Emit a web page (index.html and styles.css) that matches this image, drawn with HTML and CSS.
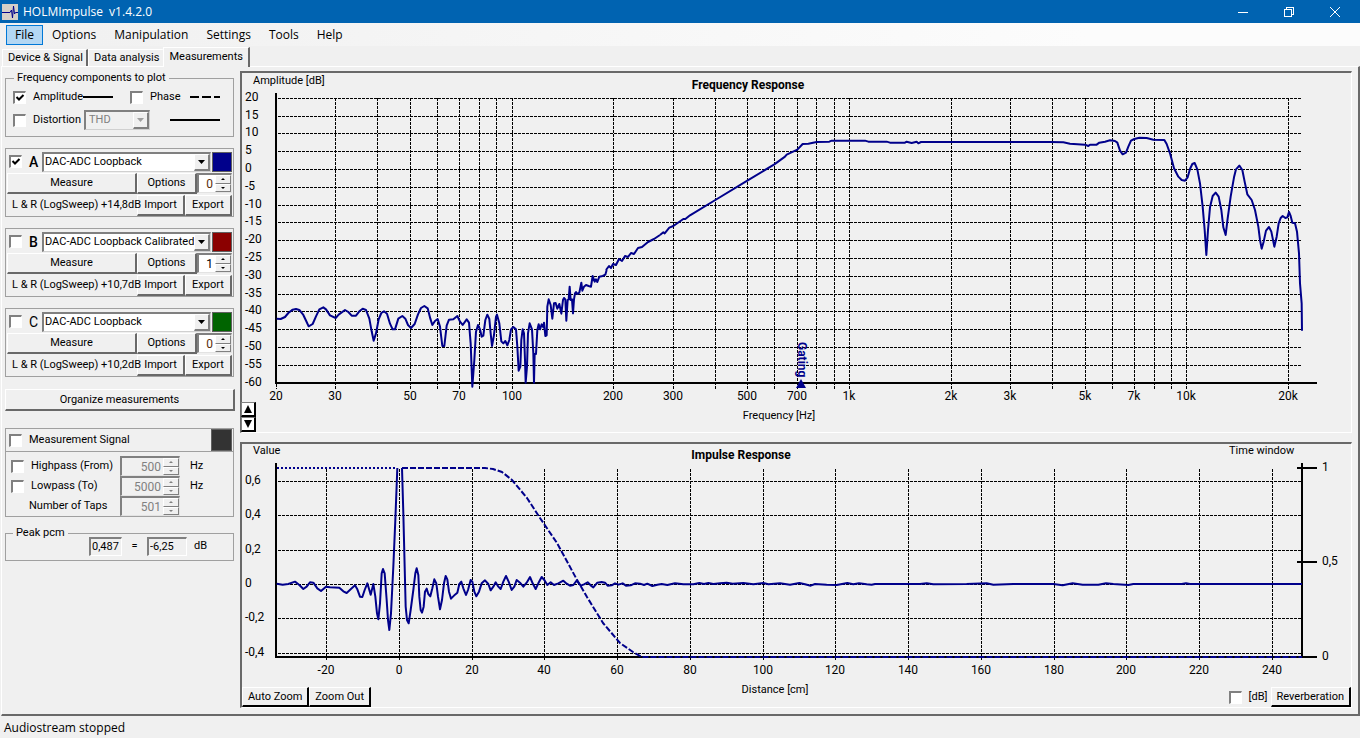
FILE: index.html
```html
<!DOCTYPE html>
<html lang="en">
<head>
<meta charset="utf-8">
<title>HOLMImpulse v1.4.2.0</title>
<link rel="stylesheet" href="styles.css">
</head>
<body>
<div class="app">
  <header class="titlebar">
    <svg class="app-icon" viewBox="0 0 16 16" width="16" height="16" aria-hidden="true">
      <rect width="16" height="16" fill="#d4d0c8"/>
      <path d="M0 8.5H8L9.5 6L10.5 14L11.5 2L12.5 10L13.5 8.5H16" fill="none" stroke="#00008b" stroke-width="1"/>
    </svg>
    <h1 class="app-title">HOLMImpulse&nbsp; v1.4.2.0</h1>
    <div class="window-buttons">
      <button class="window-button" aria-label="Minimize"><svg width="10" height="10" viewBox="0 0 10 10"><path d="M0 5.5H10"/></svg></button>
      <button class="window-button" aria-label="Restore"><svg width="10" height="10" viewBox="0 0 10 10"><path d="M.5 2.5H7.5V9.5H.5ZM2.5 2.5V.5H9.5V7.5H7.5"/></svg></button>
      <button class="window-button" aria-label="Close"><svg class="smooth" width="10" height="10" viewBox="0 0 10 10"><path d="M0 0L10 10M10 0L0 10"/></svg></button>
    </div>
  </header>

  <nav class="menubar">
    <button class="menu-item active">File</button>
    <button class="menu-item">Options</button>
    <button class="menu-item">Manipulation</button>
    <button class="menu-item">Settings</button>
    <button class="menu-item">Tools</button>
    <button class="menu-item">Help</button>
  </nav>

  <div class="tabs" role="tablist">
    <button class="tab" role="tab">Device &amp; Signal</button>
    <button class="tab" role="tab">Data analysis</button>
    <button class="tab selected" role="tab" aria-selected="true">Measurements</button>
  </div>

  <main class="page">
    <aside class="sidebar">
      <fieldset class="group components">
        <legend>Frequency components to plot</legend>
        <div class="component-row">
          <label class="check-label component-name"><input type="checkbox" class="check" checked>Amplitude</label>
          <svg class="line-sample" width="30" height="2"><path d="M0 1H30"/></svg>
          <label class="check-label phase"><input type="checkbox" class="check">Phase</label>
          <svg class="line-sample" width="30" height="2"><path d="M0 1H30" stroke-dasharray="9 3"/></svg>
        </div>
        <div class="component-row">
          <label class="check-label component-name"><input type="checkbox" class="check">Distortion</label>
          <span class="combo thd"><select disabled aria-label="Distortion type"><option>THD</option></select><span class="combo-arrow"></span></span>
          <svg class="line-sample distortion-line" width="50" height="2"><path d="M0 1H50"/></svg>
        </div>
      </fieldset>

      <section class="slot">
        <div class="slot-top">
          <input type="checkbox" class="check" id="slot-a" checked>
          <label class="slot-name strong" for="slot-a">A</label>
          <span class="combo"><select aria-label="Measurement A"><option>DAC-ADC Loopback</option></select><span class="combo-arrow"></span></span>
          <button class="swatch blue" aria-label="Colour A"></button>
        </div>
        <div class="slot-middle">
          <button class="button">Measure</button>
          <button class="button">Options</button>
          <span class="spin hot"><input type="number" value="0" aria-label="Offset A"><button class="up" aria-label="Up"></button><button class="down" aria-label="Down"></button></span>
        </div>
        <div class="slot-bottom">
          <span class="slot-info">L &amp; R (LogSweep) +14,8dB</span>
          <button class="button">Import</button>
          <button class="button">Export</button>
        </div>
      </section>

      <section class="slot">
        <div class="slot-top">
          <input type="checkbox" class="check" id="slot-b">
          <label class="slot-name strong" for="slot-b">B</label>
          <span class="combo"><select aria-label="Measurement B"><option>DAC-ADC Loopback Calibrated</option></select><span class="combo-arrow"></span></span>
          <button class="swatch red" aria-label="Colour B"></button>
        </div>
        <div class="slot-middle">
          <button class="button">Measure</button>
          <button class="button">Options</button>
          <span class="spin"><input type="number" value="1" aria-label="Offset B"><button class="up" aria-label="Up"></button><button class="down" aria-label="Down"></button></span>
        </div>
        <div class="slot-bottom">
          <span class="slot-info">L &amp; R (LogSweep) +10,7dB</span>
          <button class="button">Import</button>
          <button class="button">Export</button>
        </div>
      </section>

      <section class="slot">
        <div class="slot-top">
          <input type="checkbox" class="check" id="slot-c">
          <label class="slot-name" for="slot-c">C</label>
          <span class="combo"><select aria-label="Measurement C"><option>DAC-ADC Loopback</option></select><span class="combo-arrow"></span></span>
          <button class="swatch green" aria-label="Colour C"></button>
        </div>
        <div class="slot-middle">
          <button class="button">Measure</button>
          <button class="button">Options</button>
          <span class="spin hot"><input type="number" value="0" aria-label="Offset C"><button class="up" aria-label="Up"></button><button class="down" aria-label="Down"></button></span>
        </div>
        <div class="slot-bottom">
          <span class="slot-info">L &amp; R (LogSweep) +10,2dB</span>
          <button class="button">Import</button>
          <button class="button">Export</button>
        </div>
      </section>

      <button class="button organize">Organize measurements</button>

      <section class="signal">
        <div class="signal-head">
          <label class="check-label"><input type="checkbox" class="check">Measurement Signal</label>
          <button class="swatch dark" aria-label="Signal colour"></button>
        </div>
        <div class="signal-body">
          <label class="check-label"><input type="checkbox" class="check">Highpass (From)</label>
          <span class="spin off"><input type="number" value="500" disabled aria-label="Highpass frequency"><button class="up" disabled aria-label="Up"></button><button class="down" disabled aria-label="Down"></button></span>
          <span>Hz</span>
          <label class="check-label"><input type="checkbox" class="check">Lowpass (To)</label>
          <span class="spin off"><input type="number" value="5000" disabled aria-label="Lowpass frequency"><button class="up" disabled aria-label="Up"></button><button class="down" disabled aria-label="Down"></button></span>
          <span>Hz</span>
          <label class="taps" for="taps">Number of Taps</label>
          <span class="spin off"><input type="number" id="taps" value="501" disabled><button class="up" disabled aria-label="Up"></button><button class="down" disabled aria-label="Down"></button></span>
        </div>
      </section>

      <fieldset class="group peak">
        <legend>Peak pcm</legend>
        <div class="peak-row">
          <input class="readout narrow" value="0,487" readonly aria-label="Peak value">
          <span class="equals">=</span>
          <input class="readout" value="-6,25" readonly aria-label="Peak in dB">
          <span class="unit">dB</span>
        </div>
      </fieldset>
    </aside>

    <div class="charts">
      <section class="chart">
        <svg class="plot" viewBox="242 73 1109 359" role="img" aria-label="Frequency Response">
          <path class="grid" d="M278 98.5H1302M278 116.5H1302M278 133.5H1302M278 151.5H1302M278 169.5H1302M278 187.5H1302M278 205.5H1302M278 222.5H1302M278 240.5H1302M278 258.5H1302M278 276.5H1302M278 294.5H1302M278 311.5H1302M278 329.5H1302M278 347.5H1302M278 365.5H1302"/>
          <path class="grid" d="M276.5 384V389M335.5 98V389M377.5 98V389M410.5 98V389M437.5 98V389M459.5 98V389M479.5 98V389M496.5 98V389M512.5 98V389M613.5 98V389M673.5 98V389M715.5 98V389M747.5 98V389M774.5 98V389M797.5 98V389M816.5 98V389M834.5 98V389M849.5 98V389M951.5 98V389M1010.5 98V389M1052.5 98V389M1085.5 98V389M1112.5 98V389M1134.5 98V389M1154.5 98V389M1171.5 98V389M1186.5 98V389M1288.5 98V389"/>
          <path class="axis" d="M276 93V384M275 383H1317"/>
          <g class="curve">
            <path transform="translate(240 270) scale(.33333)" d="M110 146L122 147L135 141L145 129L158 119L168 117L178 120L190 135L200 156L206 169L218 162L228 139L238 118L250 112L258 118L270 136L287 144L296 134L315 120L325 126L335 137L348 137L358 124L368 116L378 120L388 146L395 184L401 212L408 190L416 148L424 129L432 124L441 131L450 161L458 178L465 178L475 146L487 138L496 146L504 165L513 174L524 162L534 133L543 114L553 108L563 115L571 146L577 165L585 153L593 147L600 170L607 228L613 228L620 167L627 149L640 148L652 138L660 155L668 165L680 148L687 158L692 220L697 350L703 270L708 185L714 165L720 178L725 200L730 197L736 150L742 134L748 147L752 190L756 228L762 195L768 140L771 134L778 160L784 214L790 220L796 213L802 226L808 210L813 178L820 171L828 178L832 230L836 302L841 290L844 210L848 178L852 190L855 270L857 338L861 290L864 190L869 160L876 178L880 250L882 338L884 252L888 252L892 180L896 163L900 178L905 163L910 172L912 158L916 198L920 196L922 110L926 88L932 105L937 146L942 100L947 99L952 116L958 102L964 131L969 90L972 84L976 88L979 152L983 90L986 88L989 50L992 90L996 88L999 130L1002 88L1005 70L1008 66L1012 72L1018 68L1024 38L1027 62L1032 50L1038 45L1046 48L1053 50L1058 18L1064 35L1068 28L1072 36L1078 20L1088 18L1096 14L1100 0"/>
            <path d="M606 270L609 266L611 268L613 264L616 265L619 259L622 261L625 256L628 257L631 253L634 254L638 248L642 247L648 242L654 239L660 235"/>
            <path transform="translate(660 70) scale(.33333)" d="M0 495L10 487L14 490L28 473L40 468L70 447L76 447L90 436L166 390L262 332L343 283L375 260L380 254L412 239L428 222L445 221L470 216L508 215L515 212L615 212L625 215L680 215L690 218L735 218L740 215L755 219L770 215L775 220L783 216L1170 216"/>
            <path transform="translate(1050 90) scale(.33333)" d="M0 156L40 157L60 161L105 164L115 168L120 164L140 164L148 158L165 155L180 151L195 153L202 158L210 182L218 193L228 188L235 170L243 152L253 147L268 143L290 144L310 149L343 150L350 162L360 190L372 235L385 260L395 270L405 272L413 262L420 237L427 222L434 219L442 238L450 280L458 350L464 420L469 495L474 420L480 352L488 318L497 308L506 320L514 360L520 412L527 435L533 385L542 320L552 262L558 238L568 227L577 240L585 280L592 313L605 330L615 360L625 410L630 450L635 476L641 455L648 422L657 411L664 425L673 470L680 440L686 400L692 384L698 378L706 384L712 382L717 366L722 378L727 398L735 400L741 425L747 490L750 580L755 640L756 722"/>
          </g>
          <path class="marker" d="M796 388L801 379L806 388Z"/>
          <text class="gating" transform="translate(798 342) rotate(90)">Gating</text>
          <text x="253" y="84">Amplitude [dB]</text>
          <text class="heading mid" x="748" y="89">Frequency Response</text>
          <g class="ticks">
            <text x="245" y="101">20</text><text x="245" y="119">15</text><text x="245" y="136">10</text><text x="245" y="154">5</text><text x="245" y="172">0</text><text x="245" y="190">-5</text><text x="245" y="208">-10</text><text x="245" y="225">-15</text><text x="245" y="243">-20</text><text x="245" y="261">-25</text><text x="245" y="279">-30</text><text x="245" y="297">-35</text><text x="245" y="314">-40</text><text x="245" y="332">-45</text><text x="245" y="350">-50</text><text x="245" y="368">-55</text><text x="245" y="386">-60</text>
          </g>
          <g class="ticks mid">
            <text x="276" y="400">20</text><text x="335" y="400">30</text><text x="410" y="400">50</text><text x="459" y="400">70</text><text x="512" y="400">100</text><text x="613" y="400">200</text><text x="673" y="400">300</text><text x="747" y="400">500</text><text x="797" y="400">700</text><text x="849" y="400">1k</text><text x="951" y="400">2k</text><text x="1010" y="400">3k</text><text x="1085" y="400">5k</text><text x="1134" y="400">7k</text><text x="1186" y="400">10k</text><text x="1288" y="400">20k</text>
          </g>
          <text class="mid" x="779" y="419">Frequency [Hz]</text>
        </svg>
        <div class="scale-buttons">
          <button class="scale-button" aria-label="Scale up"><svg width="8" height="8"><path d="M4 0L8 8H0Z"/></svg></button>
          <button class="scale-button" aria-label="Scale down"><svg width="8" height="8"><path d="M0 0H8L4 8Z"/></svg></button>
        </div>
      </section>

      <section class="chart">
        <svg class="plot" viewBox="242 444 1109 263" role="img" aria-label="Impulse Response">
          <path class="grid" d="M278 481.5H1302M278 515.5H1302M278 550.5H1302M278 584.5H1302M278 618.5H1302M278 653.5H1302"/>
          <path class="grid" d="M326.5 469V661M399.5 469V661M472.5 469V661M544.5 469V661M617.5 469V661M690.5 469V661M763.5 469V661M835.5 469V661M908.5 469V661M981.5 469V661M1054.5 469V661M1126.5 469V661M1199.5 469V661M1272.5 469V661"/>
          <path class="axis" d="M276 463V658M275 657H1302M1302 463V658M1297 468H1317M1297 562H1317M1302 657H1317"/>
          <g class="curve">
            <path d="M277 468H397" stroke-dasharray="2 2"/>
            <path stroke-dasharray="6 2" d="M402 468H485L493 469L502 472L512 480L527 498L540 518L557 543L576 578L587 597L603 623L620 643L633 652L642 657H1302"/>
            <path transform="translate(240 440) scale(.33333)" d="M110 431L128 434L145 432L165 425L178 435L190 447L200 440L210 427L220 428L232 445L243 453L258 440L270 442L298 443L310 454L320 459L332 448L345 436L352 448L360 470L367 471L374 450L382 430L388 450L392 464L400 432L406 470L411 520L415 538L420 490L425 400L429 387L434 400L440 480L444 540L448 570L453 520L460 380L466 240L472 84M486 84L490 220L494 380L497 500L501 540L506 550L512 510L520 450L526 400L530 385L535 405L538 470L542 510L546 518L551 500L555 455L560 446L565 462L571 469L577 445L583 418L589 430L594 470L600 508L606 480L612 430L617 408L622 418L627 455L633 476L645 464L652 458L658 432L664 425L670 445L678 465L684 450L692 420L697 425L703 455L709 469L717 455L725 430L735 421L745 432L752 451L760 440L767 427L775 440L782 447L790 425L798 408L806 425L815 450L823 440L830 420L840 428L850 440L860 428L870 411L878 430L887 447L895 430L905 411L913 420L922 435L932 427L942 435L955 430L970 422L980 431L990 437L1000 435L1010 422L1022 437L1032 433L1043 427L1052 436L1060 442L1072 428L1085 426L1095 428L1103 437L1115 436L1125 430L1135 434L1148 430L1158 437L1172 436L1185 430L1200 431L1212 435L1222 431L1237 438L1252 434L1265 432L1282 435L1305 430L1330 433L1360 433L1378 429L1392 432L1405 429L1420 432L1440 430L1460 428L1478 431L1510 429L1540 433L1570 429L1585 433L1620 430L1650 434L1678 429L1695 433L1712 437L1725 432L1760 434L1790 435L1822 429L1840 433L1857 430L1880 433L1895 434L1905 432L2040 432L2060 430L2080 433L2180 432L2240 430L2260 434L2320 432L2400 432L2440 432L2468 436L2498 430L2528 434L2575 434L2598 430L2620 432L2665 435L2680 432L2825 432L2838 430L2850 432L3186 432"/>
          </g>
          <text x="253" y="454">Value</text>
          <text x="1229" y="454">Time window</text>
          <text class="heading mid" x="741" y="459">Impulse Response</text>
          <g class="ticks">
            <text x="245" y="484">0,6</text><text x="245" y="518">0,4</text><text x="245" y="553">0,2</text><text x="245" y="587">0</text><text x="245" y="621">-0,2</text><text x="245" y="656">-0,4</text>
            <text x="1322" y="471">1</text><text x="1322" y="565">0,5</text><text x="1322" y="660">0</text>
          </g>
          <g class="ticks mid">
            <text x="326" y="674">-20</text><text x="399" y="674">0</text><text x="472" y="674">20</text><text x="544" y="674">40</text><text x="617" y="674">60</text><text x="690" y="674">80</text><text x="763" y="674">100</text><text x="835" y="674">120</text><text x="908" y="674">140</text><text x="981" y="674">160</text><text x="1054" y="674">180</text><text x="1126" y="674">200</text><text x="1199" y="674">220</text><text x="1272" y="674">240</text>
          </g>
          <text class="mid" x="775" y="693">Distance [cm]</text>
        </svg>
        <div class="chart-tools">
          <button class="button bold-edge">Auto Zoom</button>
          <button class="button bold-edge">Zoom Out</button>
          <label class="check-label db"><input type="checkbox" class="check">[dB]</label>
          <button class="button bold-edge">Reverberation</button>
        </div>
      </section>
    </div>
  </main>

  <footer class="statusbar">Audiostream stopped</footer>
</div>
</body>
</html>
```

FILE: styles.css
```css
* { box-sizing: border-box; }

body {
  margin: 0;
  background: #f0f0f0;
  color: #000;
  font: 11px/14px Roboto, "Liberation Sans", sans-serif;
}

button, input, select {
  margin: 0;
  padding: 0;
  border: 0;
  border-radius: 0;
  background: none;
  color: inherit;
  font: inherit;
}

.app { display: flex; flex-direction: column; min-height: 100vh; }

/* Title bar */
.titlebar {
  display: flex;
  align-items: center;
  gap: 5px;
  height: 23px;
  padding: 0 2px;
  background: #0063b1;
  color: #fff;
}
.app-title { flex: 1; margin: 0; font: 12px/16px "Open Sans", "Noto Sans", sans-serif; }
.window-buttons { display: flex; }
.window-button { display: grid; place-items: center; width: 46px; height: 22px; }
.window-button svg { fill: none; stroke: #fff; shape-rendering: crispEdges; }
.window-button .smooth { shape-rendering: auto; }

/* Menu */
.menubar {
  display: flex;
  align-items: center;
  height: 23px;
  padding: 0 6px;
  background: linear-gradient(90deg, #f0f0f0, #fcfcfc 80%);
}
.menu-item {
  height: 20px;
  padding: 0 8px;
  border: 1px solid transparent;
  font: 12px/16px "Open Sans", "Noto Sans", sans-serif;
}
.menu-item.active { border-color: #0078d7; background: #b3d7f3; }

/* Tabs */
.tabs { display: flex; align-items: flex-end; height: 20px; padding-left: 2px; }
.tab {
  height: 17px;
  padding: 0 3px 0 5px;
  border: solid;
  border-width: 1px 2px 0 1px;
  border-color: #fff #696969 #fff #fff;
}
.tab:nth-child(2) { border-right-color: #f0f0f0; }
.tab.selected { height: 20px; margin: 0 0 -1px -1px; padding: 0 5px 2px; background: #f0f0f0; z-index: 1; }

.page {
  display: flex;
  gap: 6px;
  margin-left: 1px;
  padding: 4px 6px 6px 3px;
  border: solid;
  border-width: 1px 2px 2px 1px;
  border-color: #fff #696969 #696969 #fff;
}

/* Sidebar */
.sidebar { display: flex; flex: none; flex-direction: column; width: 229px; }
.group {
  min-width: 0;
  margin: 0;
  padding: 0 7px;
  border: 1px solid #a0a0a0;
}
.components { padding-bottom: 2px; padding-top: 1px; }
.group legend { margin-left: 1px; padding: 0 3px; }
.component-row { display: flex; align-items: center; height: 22px; }
.component-name { width: 70px; }
.component-row:last-child { height: 26px; padding-bottom: 2px; }
.phase { width: 60px; margin-left: 17px; }
.line-sample { flex: none; stroke: #000; stroke-width: 2; }
.thd { flex: none; width: 66px; margin-left: 1px; }
.distortion-line { margin-left: 20px; }

.check-label { display: flex; align-items: center; gap: 7px; white-space: nowrap; }
.check {
  flex: none;
  appearance: none;
  width: 13px;
  height: 13px;
  border: solid;
  border-width: 2px 1px 1px 2px;
  border-color: #808080 #fff #fff #808080;
  background: #fff;
}
.check:checked {
  background: #fff url("data:image/svg+xml,%3Csvg xmlns='http://www.w3.org/2000/svg' width='10' height='10'%3E%3Cpath d='M1.5 4L4 6.5L8.5 2' fill='none' stroke='%23000' stroke-width='2'/%3E%3C/svg%3E") 0 0 no-repeat;
}

.combo {
  position: relative;
  display: block;
  height: 20px;
  border: solid;
  border-width: 2px 1px 1px 2px;
  border-color: #808080 #d0d0d0 #d0d0d0 #808080;
  background: #fff;
}
.combo select {
  appearance: none;
  display: block;
  width: 100%;
  height: 16px;
  padding: 0 0 0 1px;
  outline: 0;
  white-space: nowrap;
}
.combo-arrow {
  position: absolute;
  inset: 0 0 0 auto;
  width: 16px;
  border: solid;
  border-width: 1px 2px 2px 1px;
  border-color: #fff #808080 #808080 #fff;
  background: #f0f0f0 url("data:image/svg+xml,%3Csvg xmlns='http://www.w3.org/2000/svg' width='7' height='4'%3E%3Cpath d='M0 0H7L3.5 4Z'/%3E%3C/svg%3E") center no-repeat;
  pointer-events: none;
}
.thd { background: #f0f0f0; }
.thd select { padding-left: 3px; color: #808080; opacity: 1; }
.thd .combo-arrow { background-image: url("data:image/svg+xml,%3Csvg xmlns='http://www.w3.org/2000/svg' width='7' height='4'%3E%3Cpath d='M0 0H7L3.5 4Z' fill='%23a0a0a0'/%3E%3C/svg%3E"); }

.button {
  border: solid;
  border-width: 1px 2px 2px 1px;
  border-color: #fff #696969 #696969 #fff;
  background: #f0f0f0;
  white-space: nowrap;
}

.slot {
  display: grid;
  align-content: start;
  row-gap: 1px;
  height: 69px;
  margin-top: 11px;
  padding: 2px 1px 1px;
  border: 1px solid #a0a0a0;
}
.slot-top { display: grid; grid-template-columns: 19px 12px 1fr 20px; align-items: center; column-gap: 1px; height: 21px; padding-left: 2px; }
.slot-name { font-size: 14px; line-height: 18px; }
.slot-name.strong { font-weight: 500; }
.swatch { height: 20px; border: 1px solid #606060; }
.blue { background: #00008b; }
.red { background: #8b0000; }
.green { background: #006400; }
.dark { background: #333; }

.slot-middle { display: grid; grid-template-columns: 130px 60px 1fr; height: 21px; }
.slot-bottom { display: grid; grid-template-columns: 130px 48px 1fr; height: 21px; }
.slot-info { padding: 3px 0 0 5px; white-space: nowrap; z-index: 1; }

.spin {
  display: grid;
  grid-template-columns: 1fr 16px;
  grid-template-rows: 1fr 1fr;
  height: 20px;
  border: solid;
  border-width: 2px 1px 1px 2px;
  border-color: #808080 #e3e3e3 #e3e3e3 #808080;
  background: #fff;
}
.spin input { grid-row: 1 / 3; appearance: textfield; min-width: 0; padding-right: 2px; text-align: right; outline: 0; font-size: 12px; }
.spin input::-webkit-inner-spin-button { display: none; }
.spin.hot input { color: #5a2d0c; }
.spin button { border: 1px solid; border-color: #fff #808080 #808080 #fff; background: #f0f0f0 center no-repeat; }
.spin .up { background-image: url("data:image/svg+xml,%3Csvg xmlns='http://www.w3.org/2000/svg' width='4' height='2'%3E%3Cpath d='M0 2L2 0L4 2Z'/%3E%3C/svg%3E"); }
.spin .down { background-image: url("data:image/svg+xml,%3Csvg xmlns='http://www.w3.org/2000/svg' width='4' height='2'%3E%3Cpath d='M0 0H4L2 2Z'/%3E%3C/svg%3E"); }
.spin.off { background: #f0f0f0; color: #808080; }
.spin.off .up { background-image: url("data:image/svg+xml,%3Csvg xmlns='http://www.w3.org/2000/svg' width='4' height='2'%3E%3Cpath d='M0 2L2 0L4 2Z' fill='%23808080'/%3E%3C/svg%3E"); }
.spin.off .down { background-image: url("data:image/svg+xml,%3Csvg xmlns='http://www.w3.org/2000/svg' width='4' height='2'%3E%3Cpath d='M0 0H4L2 2Z' fill='%23808080'/%3E%3C/svg%3E"); }

.organize { width: 230px; height: 22px; margin-top: 12px; }

.signal { margin-top: 17px; border: 1px solid #a0a0a0; }
.signal-head { display: flex; align-items: center; justify-content: space-between; height: 23px; padding-left: 3px; border-bottom: 1px solid #a0a0a0; }
.signal-head .swatch { width: 21px; height: 22px; margin-right: 1px; }
.signal-body {
  display: grid;
  grid-template-columns: 109px 60px auto;
  grid-auto-rows: 20px;
  align-items: center;
  padding: 4px 0 0 5px;
}
.signal-body > :nth-child(3n) { padding-left: 10px; }
.signal-body .taps { padding-left: 18px; }

.peak { margin-top: 9px; }
.peak legend { margin-left: 0; }
.peak-row { display: flex; align-items: center; height: 26px; margin-top: -7px; margin-bottom: 1px; padding-left: 76px; }
.readout { width: 40px; height: 19px; padding: 0 1px; border: solid; border-width: 2px 1px 1px 2px; border-color: #808080 #fff #fff #808080; }
.readout.narrow { width: 33px; }
.equals { width: 25px; text-align: center; }
.unit { margin-left: 7px; }

/* Charts */
.charts { display: flex; flex: 1; flex-direction: column; gap: 9px; min-width: 0; }
.chart {
  position: relative;
  border: solid;
  border-width: 2px 1px 1px 2px;
  border-color: #696969 #fff #fff #696969;
}
.plot { display: block; width: 100%; height: auto; }
.grid { fill: none; stroke: #000; stroke-width: 1; stroke-dasharray: 3 1; shape-rendering: crispEdges; }
.axis { fill: none; stroke: #000; stroke-width: 2; shape-rendering: crispEdges; }
.curve path { fill: none; stroke: #00008b; stroke-width: 2; stroke-linejoin: round; vector-effect: non-scaling-stroke; }
.marker { fill: #00008b; }
.gating { fill: #00008b; font-size: 12px; font-weight: 700; }
.ticks { font-size: 12px; }
.heading { font-size: 12px; font-weight: 700; }
.mid { text-anchor: middle; }

.scale-buttons { position: absolute; left: -1px; bottom: 0; display: grid; }
.scale-button { display: grid; place-items: center; width: 15px; height: 15px; border: solid; border-width: 1px 2px 2px 1px; border-color: #808080 #000 #000 #808080; background: #fff; }

.chart-tools { position: absolute; right: 0; bottom: 0; left: 0; display: flex; align-items: center; }
.chart-tools .button { height: 20px; padding: 0 5px; }
.bold-edge { border-color: #fff #000 #000 #fff; }
.db { margin: 0 3px 0 auto; }

.statusbar { padding: 4px; font: 12px/16px "Open Sans", "Noto Sans", sans-serif; }
```
